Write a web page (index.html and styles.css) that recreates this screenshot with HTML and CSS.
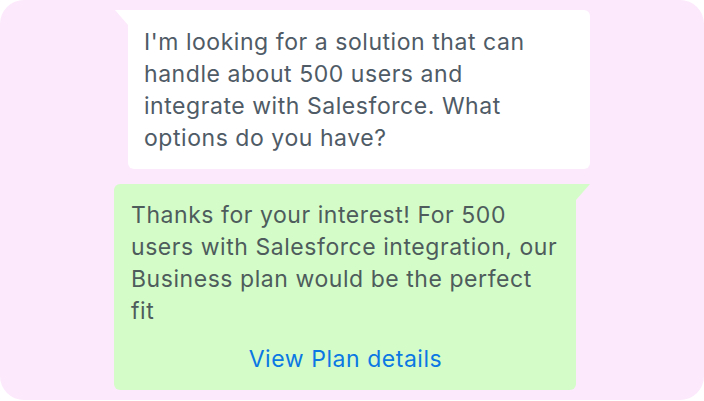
FILE: index.html
```html
<!DOCTYPE html>
<html>
<head>
<meta charset="utf-8">
<link rel="stylesheet" href="styles.css">
</head>
<body>
<div class="chat">
  <div class="bubble user">I'm looking for a solution that can handle about 500 users and integrate with Salesforce. What options do you have?</div>
  <div class="bubble bot">
    <div class="msg">Thanks for your interest! For 500 users with Salesforce integration, our Business plan would be the perfect fit</div>
    <div class="link">View Plan details</div>
  </div>
</div>
</body>
</html>
```
FILE: styles.css
```css
html, body {
  margin: 0;
  padding: 0;
  background: #ffffff;
}
.chat {
  width: 704px;
  height: 400px;
  box-sizing: border-box;
  background: #fce9fc;
  border-radius: 24px;
  padding: 10px 114px 0 114px;
  display: flex;
  flex-direction: column;
  gap: 15px;
  font-family: Inter, "Noto Sans", sans-serif;
  font-size: 23px;
  letter-spacing: 0.55px;
  line-height: 32px;
  color: #4f5b66;
}
.bubble {
  position: relative;
  width: 462px;
  box-sizing: border-box;
}
.user {
  align-self: flex-end;
  background: #ffffff;
  border-radius: 0 6px 6px 6px;
  padding: 16px 28px 15px 16px;
}
.user::before {
  content: "";
  position: absolute;
  left: -13px;
  top: 0;
  width: 0;
  height: 0;
  border-top: 15px solid #ffffff;
  border-left: 13px solid transparent;
}
.bot {
  align-self: flex-start;
  background: #d4fcc9;
  border-radius: 6px 0 6px 6px;
  padding: 15px 16px 15px 17px;
  color: #4e5c5c;
}
.bot::after {
  content: "";
  position: absolute;
  right: -14px;
  top: 0;
  width: 0;
  height: 0;
  border-top: 16px solid #d4fcc9;
  border-right: 14px solid transparent;
}
.link {
  margin-top: 16px;
  text-align: center;
  color: #0b78e3;
}
```
